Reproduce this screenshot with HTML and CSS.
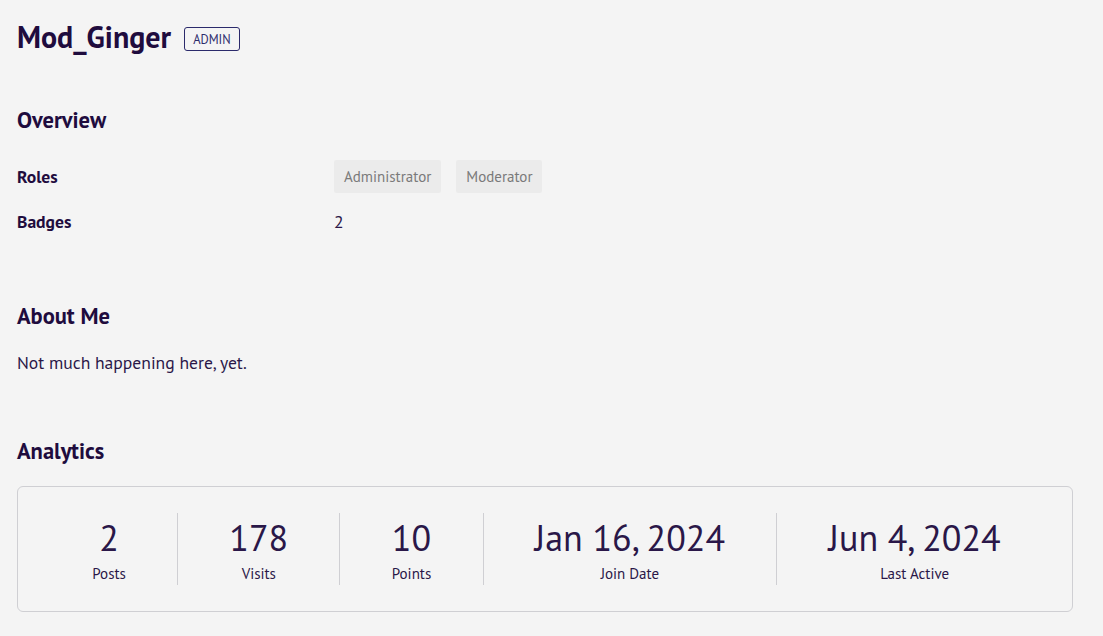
FILE: index.html
```html
<!DOCTYPE html>
<html lang="en">
<head>
    <meta charset="UTF-8">
    <meta name="viewport" content="width=device-width, initial-scale=1.0">
    <title>Mod_Ginger</title>
    <link rel="stylesheet" href="styles.css">
</head>
<body>
    <div class="profile-header">
        <h1>Mod_Ginger</h1>
        <span class="tag">Admin</span>
    </div>

    <section class="block overview">
        <h2>Overview</h2>
        <div class="info-list">
            <div class="info-row">
                <div class="info-label">Roles</div>
                <div class="info-value">
                    <span class="chip">Administrator</span>
                    <span class="chip">Moderator</span>
                </div>
            </div>
            <div class="info-row">
                <div class="info-label">Badges</div>
                <div class="info-value">2</div>
            </div>
        </div>
    </section>

    <section class="block">
        <h2>About Me</h2>
        <p class="about">Not much happening here, yet.</p>
    </section>

    <section class="block">
        <h2>Analytics</h2>
        <div class="stats">
            <div class="stat">
                <div class="stat-num">2</div>
                <div class="stat-label">Posts</div>
            </div>
            <div class="stat">
                <div class="stat-num">178</div>
                <div class="stat-label">Visits</div>
            </div>
            <div class="stat">
                <div class="stat-num">10</div>
                <div class="stat-label">Points</div>
            </div>
            <div class="stat">
                <div class="stat-num">Jan 16, 2024</div>
                <div class="stat-label">Join Date</div>
            </div>
            <div class="stat">
                <div class="stat-num">Jun 4, 2024</div>
                <div class="stat-label">Last Active</div>
            </div>
        </div>
    </section>
</body>
</html>
```

FILE: styles.css
```css
body {
    margin: 0;
    padding: 16px 30px 0 17px;
    background-color: #f4f4f4;
    color: #2a1748;
    font-family: "PT Sans", Lato, "Noto Sans", sans-serif;
    font-size: 17.6px;
}

.profile-header {
    display: flex;
    align-items: center;
    gap: 13px;
}

h1 {
    margin: 0;
    color: #1f0c3e;
    font-size: 30px;
    line-height: 42px;
    font-weight: 700;
}

.tag {
    border: 1px solid #2b2a6b;
    border-radius: 3px;
    color: #2b2a6b;
    font-size: 12.5px;
    text-transform: uppercase;
    padding: 4px 8px;
    line-height: 14px;
    margin-top: 3px;
}

.block {
    margin-top: 61px;
}

.overview {
    margin-top: 47px;
}

h2 {
    margin: 0 0 20px;
    color: #1f0c3e;
    font-size: 22.5px;
    line-height: 30px;
    font-weight: 700;
}

.info-list {
    display: flex;
    flex-direction: column;
    gap: 12px;
    padding: 5px 0 2px;
}

.info-row {
    display: grid;
    grid-template-columns: 317px 1fr;
    align-items: center;
    min-height: 33px;
}

.info-label {
    color: #1f0c3e;
    font-weight: 700;
}

.info-value {
    display: flex;
    gap: 15px;
}

.chip {
    background-color: #ebebeb;
    color: #7a7a7a;
    font-size: 15px;
    line-height: 33px;
    padding: 0 10px;
    border-radius: 2px;
}

.about {
    margin: 0;
    line-height: 24px;
}

.stats {
    display: flex;
    margin-top: 3px;
    border: 1px solid #cfcfd3;
    border-radius: 6px;
    padding: 26px 20px 26px 23px;
}

.stat {
    flex: 1 1 auto;
    text-align: center;
    border-left: 1px solid #cfcfd3;
}

.stat:first-child {
    border-left: none;
}

.stat-num {
    font-size: 36px;
    line-height: 50px;
}

.stat-label {
    font-size: 15px;
    line-height: 22px;
}
```
